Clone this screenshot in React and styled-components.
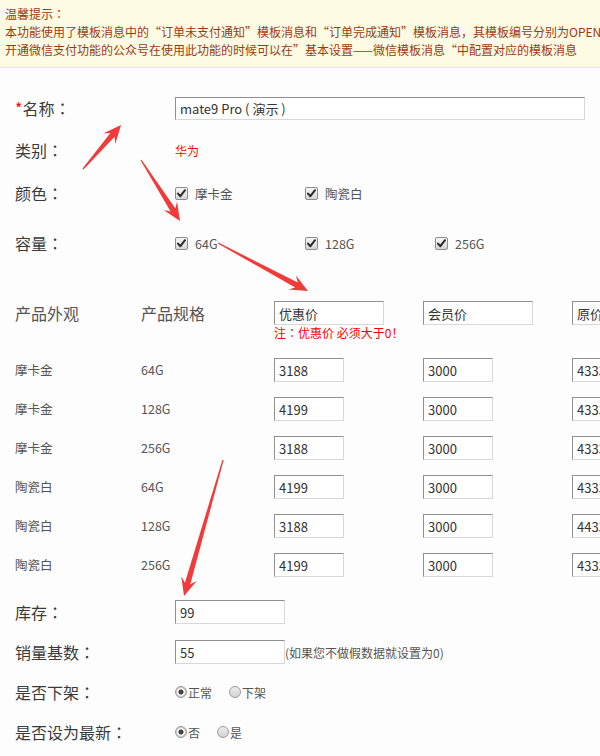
import React from "react";
import styled, { createGlobalStyle } from "styled-components";

const Global = createGlobalStyle`
  html, body { margin: 0; padding: 0; overflow: hidden; background: #fdfdfd; }
  body {
    width: 600px; height: 756px;
    font-family: "Noto Sans CJK SC", "Noto Sans", sans-serif;
    color: #333;
  }
  * { box-sizing: border-box; }
`;

const Page = styled.div`
  position: relative;
  width: 600px;
  height: 756px;
  overflow: hidden;
  background: #fdfdfd;
`;

const Notice = styled.div`
  background: #fefbe4;
  border-bottom: 1px solid #f6e7b0;
  padding: 5px 0 8px 5px;
  font-size: 12px;
  line-height: 18px;
  color: #9b3a10;
  white-space: nowrap;
  overflow: hidden;
`;

const Colon = styled.span`
  font-family: "Noto Sans CJK TC", "Noto Sans CJK SC", sans-serif;
`;

const Form = styled.div`
  padding: 20px 0 0 15px;
`;

const Row = styled.div`
  display: flex;
  align-items: center;
  height: ${(p) => p.$h}px;
  white-space: nowrap;
`;

const Label = styled.div`
  flex: none;
  width: 160px;
  font-size: 16px;
  color: #3a3a3a;
`;

const Star = styled.span`
  color: #f00;
`;

const Red = styled.span`
  color: #f00;
  font-size: 12px;
`;

const TextInput = styled.input`
  width: ${(p) => p.$w}px;
  height: ${(p) => p.$hgt || 24}px;
  border: 1px solid;
  border-color: #909090 #d8d8d8 #d8d8d8 #909090;
  background: #fff;
  padding: 0 4px;
  font-family: "Noto Sans CJK SC", "Noto Sans", sans-serif;
  font-size: 13px;
  color: #333;
  outline: none;
  flex: none;
`;

const CheckItem = styled.label`
  display: inline-flex;
  align-items: center;
  width: 130px;
  font-size: 12.5px;
  color: #555;
`;

const Box = styled.span`
  width: 13px;
  height: 13px;
  margin-right: 7px;
  border: 1px solid #8c8c8c;
  border-radius: 2px;
  background: linear-gradient(#f6f6f6, #d6d6d6);
  display: inline-flex;
  align-items: center;
  justify-content: center;
  flex: none;
`;

const RadioItem = styled.label`
  display: inline-flex;
  align-items: center;
  margin-right: 17px;
  font-size: 12px;
  color: #555;
`;

const Dot = styled.span`
  width: 12px;
  height: 12px;
  margin-right: 1px;
  border-radius: 50%;
  border: 1px solid #9c9c9c;
  background: ${(p) =>
    p.$on
      ? "radial-gradient(circle, #444 0 2.3px, #f4f4f4 2.8px 3.6px, #cfcfcf 4.2px)"
      : "linear-gradient(#ececec, #d2d2d2)"};
  flex: none;
`;

const Hint = styled.span`
  font-size: 12px;
  color: #555;
`;

const Table = styled.div`
  width: max-content;
`;

const TableHead = styled.div`
  display: grid;
  grid-template-columns: 126px 133px 149px 149px 149px;
  align-items: start;
  height: 78px;
  padding-top: 29px;
`;

const HeadText = styled.div`
  font-size: 16px;
  line-height: 24px;
  color: #555;
`;

const HeadCell = styled.div`
  display: flex;
  flex-direction: column;
`;

const Note = styled.div`
  font-size: 12px;
  line-height: 16px;
  color: #f00;
  white-space: nowrap;
`;

const TableRow = styled.div`
  display: grid;
  grid-template-columns: 126px 133px 149px 149px 149px;
  align-items: center;
  height: 39px;
`;

const Cell = styled.div`
  font-size: 12.5px;
  color: #555;
`;

const Bottom = styled.div`
  padding-top: 8px;
`;

const Overlay = styled.svg`
  position: absolute;
  left: 0;
  top: 0;
  pointer-events: none;
`;

function Check() {
  return (
    <svg width="9" height="9" viewBox="0 0 9 9">
      <path d="M1 4.6 L3.4 7.2 L8 1.2" fill="none" stroke="#2b2b2b" strokeWidth="2" strokeLinecap="round" strokeLinejoin="round" />
    </svg>
  );
}

function CheckOpt({ children }) {
  return (
    <CheckItem>
      <Box>
        <Check />
      </Box>
      {children}
    </CheckItem>
  );
}

function Radio({ on, children }) {
  return (
    <RadioItem>
      <Dot $on={on} />
      {children}
    </RadioItem>
  );
}

function FieldLabel({ children, star }) {
  return (
    <Label>
      {star && <Star>*</Star>}
      {children}
      <Colon>：</Colon>
    </Label>
  );
}

function arrow(tx, ty, px, py, headLen = 18, headHalf = 8, shaftHalf = 2.8) {
  const dx = px - tx;
  const dy = py - ty;
  const L = Math.hypot(dx, dy);
  const ux = dx / L;
  const uy = dy / L;
  const nx = -uy;
  const ny = ux;
  const bx = px - ux * headLen;
  const by = py - uy * headLen;
  const sx = px - ux * (headLen - 5);
  const sy = py - uy * (headLen - 5);
  const pts = [
    [tx - nx * 0.6, ty - ny * 0.6],
    [tx + nx * 0.6, ty + ny * 0.6],
    [sx + nx * shaftHalf, sy + ny * shaftHalf],
    [bx + nx * headHalf, by + ny * headHalf],
    [px, py],
    [bx - nx * headHalf, by - ny * headHalf],
    [sx - nx * shaftHalf, sy - ny * shaftHalf],
  ];
  return pts.map((p) => p.map((v) => v.toFixed(1)).join(",")).join(" ");
}

const arrows = [
  [83, 169, 121, 125],
  [141, 160, 180, 221],
  [218, 243, 308, 291],
  [223, 460, 184, 596],
];

const rows = [
  ["摩卡金", "64G", "3188", "3000", "4333"],
  ["摩卡金", "128G", "4199", "3000", "4333"],
  ["摩卡金", "256G", "3188", "3000", "4333"],
  ["陶瓷白", "64G", "4199", "3000", "4333"],
  ["陶瓷白", "128G", "3188", "3000", "4433"],
  ["陶瓷白", "256G", "4199", "3000", "4333"],
];

export default function App() {
  return (
    <Page>
      <Global />
      <Notice>
        <div>
          温馨提示<Colon>：</Colon>
        </div>
        <div>
          本功能使用了模板消息中的“订单未支付通知”模板消息和“订单完成通知”模板消息，其模板编号分别为OPENTM200444326、OPENTM202521011
        </div>
        <div>开通微信支付功能的公众号在使用此功能的时候可以在”基本设置——微信模板消息“中配置对应的模板消息</div>
      </Notice>
      <Form>
        <Row $h={40}>
          <FieldLabel star>名称</FieldLabel>
          <TextInput $w={410} $hgt={23} defaultValue="mate9 Pro ( 演示 )" />
        </Row>
        <Row $h={44}>
          <FieldLabel>类别</FieldLabel>
          <Red>华为</Red>
        </Row>
        <Row $h={42}>
          <FieldLabel>颜色</FieldLabel>
          <CheckOpt>摩卡金</CheckOpt>
          <CheckOpt>陶瓷白</CheckOpt>
        </Row>
        <Row $h={58}>
          <FieldLabel>容量</FieldLabel>
          <CheckOpt>64G</CheckOpt>
          <CheckOpt>128G</CheckOpt>
          <CheckOpt>256G</CheckOpt>
        </Row>
        <Table>
          <TableHead>
            <HeadText>产品外观</HeadText>
            <HeadText>产品规格</HeadText>
            <HeadCell>
              <TextInput $w={110} defaultValue="优惠价" />
              <Note>
                注<Colon>：</Colon>优惠价 必须大于0！
              </Note>
            </HeadCell>
            <HeadCell>
              <TextInput $w={110} defaultValue="会员价" />
            </HeadCell>
            <HeadCell>
              <TextInput $w={110} defaultValue="原价" />
            </HeadCell>
          </TableHead>
          {rows.map((r, i) => (
            <TableRow key={i}>
              <Cell>{r[0]}</Cell>
              <Cell>{r[1]}</Cell>
              <div>
                <TextInput $w={70} defaultValue={r[2]} />
              </div>
              <div>
                <TextInput $w={70} defaultValue={r[3]} />
              </div>
              <div>
                <TextInput $w={70} defaultValue={r[4]} />
              </div>
            </TableRow>
          ))}
        </Table>
        <Bottom>
          <Row $h={40}>
            <FieldLabel>库存</FieldLabel>
            <TextInput $w={110} defaultValue="99" />
          </Row>
          <Row $h={40}>
            <FieldLabel>销量基数</FieldLabel>
            <TextInput $w={110} defaultValue="55" />
            <Hint>(如果您不做假数据就设置为0)</Hint>
          </Row>
          <Row $h={40}>
            <FieldLabel>是否下架</FieldLabel>
            <Radio on>正常</Radio>
            <Radio>下架</Radio>
          </Row>
          <Row $h={40}>
            <FieldLabel>是否设为最新</FieldLabel>
            <Radio on>否</Radio>
            <Radio>是</Radio>
          </Row>
        </Bottom>
      </Form>
      <Overlay width="600" height="756" viewBox="0 0 600 756">
        {arrows.map((a, i) => (
          <polygon key={i} points={arrow(...a)} fill="#f33a3a" />
        ))}
      </Overlay>
    </Page>
  );
}
